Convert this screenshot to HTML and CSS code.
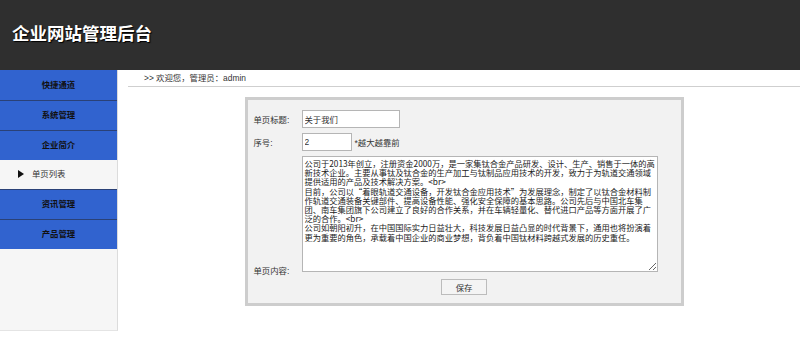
FILE: index.html
```html
<!DOCTYPE html>
<html lang="zh-CN">
<head>
  <meta charset="UTF-8">
  <title>企业网站管理后台</title>
  <link rel="stylesheet" href="styles.css">
</head>
<body>

  <!-- 顶部 -->
  <div class="header">
    <h1>企业网站管理后台</h1>
  </div>

  <div class="wrap">
    <!-- 左侧菜单 -->
    <div class="sidebar">
      <div class="menu-item">快捷通道</div>
      <div class="menu-item">系统管理</div>
      <div class="menu-item">企业简介</div>
      <div class="sub-item">单页列表</div>
      <div class="menu-item">资讯管理</div>
      <div class="menu-item">产品管理</div>
    </div>

    <!-- 右侧内容 -->
    <div class="main">
      <div class="crumb">&gt;&gt; 欢迎您，管理员：admin</div>

      <div class="form-box">
        <div class="form-grid">
          <label class="label">单页标题:</label>
          <input type="text" class="input-title" value="关于我们">

          <label class="label">序号:</label>
          <div class="sort-row">
            <input type="text" class="input-sort" value="2">
            <span class="tip">*越大越靠前</span>
          </div>

          <label class="label label-bottom">单页内容:</label>
          <textarea class="content" wrap="off">公司于2013年创立，注册资金2000万，是一家集钛合金产品研发、设计、生产、销售于一体的高
新技术企业。主要从事钛及钛合金的生产加工与钛制品应用技术的开发，致力于为轨道交通领域
提供适用的产品及技术解决方案。&lt;br&gt;
目前，公司以“着眼轨道交通设备，开发钛合金应用技术”为发展理念，制定了以钛合金材料制
作轨道交通装备关键部件、提高设备性能、强化安全保障的基本思路。公司先后与中国北车集
团、南车集团旗下公司建立了良好的合作关系，并在车辆轻量化、替代进口产品等方面开展了广
泛的合作。&lt;br&gt;
公司如朝阳初升，在中国国际实力日益壮大，科技发展日益凸显的时代背景下，通用也将扮演着
更为重要的角色，承载着中国企业的商业梦想，背负着中国钛材料跨越式发展的历史重任。</textarea>
        </div>
        <div class="btn-row">
          <button>保存</button>
        </div>
      </div>
    </div>
  </div>

</body>
</html>
```

FILE: styles.css
```css
body {
  margin: 0;
  font-family: "Liberation Sans", "Noto Sans CJK SC", sans-serif;
  font-size: 8.4px;
  color: #333;
  background: #fff;
}
/* 顶部 */
.header {
  height: 70px;
  background-color: #2f2f2f;
}
.header h1 {
  margin: 0;
  padding: 24px 12px 0;
  font-size: 17.5px;
  line-height: 20px;
  color: #fff;
  text-shadow: 1px 1px 1px #000;
}
.wrap {
  display: flex;
}
/* 左侧菜单 */
.sidebar {
  width: 117px;
  height: 260px;
  background-color: #f6f6f6;
  border-right: 1px solid #dcdcdc;
  border-bottom: 1px solid #e4e4e4;
}
.menu-item {
  height: 29px;
  line-height: 29px;
  text-align: center;
  background-color: #3163cf;
  border-top: 1px solid #2a4177;
  color: #111;
  font-weight: bold;
}
.menu-item:first-child {
  border-top-color: #3163cf;
}
.sub-item {
  height: 29px;
  line-height: 29px;
  padding-left: 32px;
  position: relative;
  color: #333;
}
.sub-item::before {
  content: "";
  position: absolute;
  left: 18px;
  top: 10px;
  border-left: 6px solid #111;
  border-top: 4px solid transparent;
  border-bottom: 4px solid transparent;
}
/* 右侧内容 */
.main {
  flex: 1;
  padding-left: 10px;
}
.crumb {
  height: 16px;
  line-height: 16px;
  padding-left: 16px;
  border-bottom: 1px solid #cfcfcf;
}
.form-box {
  width: 433px;
  margin: 10px auto 0;
  background-color: #f2f2f2;
  border: 3px solid #cdcdcd;
  padding: 10px 0 8px;
}
.form-grid {
  display: grid;
  grid-template-columns: 48px 356px;
  row-gap: 5px;
  padding-left: 6px;
  align-items: center;
}
.label {
  color: #333;
}
.label-bottom {
  align-self: end;
  margin-bottom: -4px;
}
input[type="text"] {
  box-sizing: border-box;
  height: 18px;
  padding: 0 2px;
  border: 1px solid #b5b5b5;
  background: #fff;
  font-family: inherit;
  font-size: 8.4px;
  color: #333;
  margin: 0;
}
.input-title {
  width: 98px;
}
.sort-row {
  display: flex;
  align-items: center;
  gap: 3px;
}
.input-sort {
  width: 50px;
}
.content {
  box-sizing: border-box;
  width: 356px;
  height: 116px;
  margin: 0;
  padding: 2px 2px;
  border: 1px solid #b5b5b5;
  background: #fff;
  font-family: "Noto Sans CJK SC", sans-serif;
  font-size: 8.25px;
  line-height: 9.2px;
  color: #222;
  overflow: hidden;
  white-space: pre;
}
.btn-row {
  text-align: center;
  margin-top: 7px;
}
button {
  width: 46px;
  height: 16px;
  padding: 0;
  background-color: #f4f4f4;
  border: 1px solid #bcbcbc;
  font-family: inherit;
  font-size: 8.4px;
  color: #333;
}
```
